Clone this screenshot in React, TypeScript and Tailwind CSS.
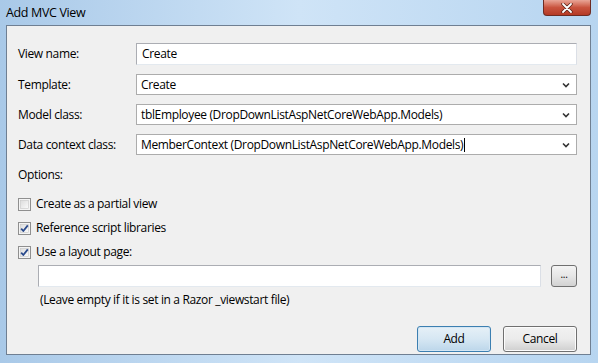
import React from 'react';

const font = { fontFamily: '"Open Sans", "Noto Sans", sans-serif' };

function Chevron() {
  return (
    <svg width="8" height="6" viewBox="0 0 8 6" className="shrink-0">
      <path d="M1 1.5 L4 4.5 L7 1.5" fill="none" stroke="#333" strokeWidth="1.6" />
    </svg>
  );
}

function Combo({ value, caret }: { value: string; caret?: boolean }) {
  return (
    <div className="flex h-[21px] items-center justify-between border border-[#acacac] bg-white pl-[4px] pr-[6px]">
      <span className="flex items-center text-[12px] leading-none text-black">
        {value}
        {caret && <span className="ml-[1px] inline-block h-[14px] w-px bg-black" />}
      </span>
      <Chevron />
    </div>
  );
}

function Check({ checked, label }: { checked?: boolean; label: string }) {
  return (
    <div className="flex h-[16px] items-center gap-[5px]">
      <svg width="13" height="13" viewBox="0 0 13 13" className="shrink-0">
        <defs>
          <linearGradient id="cbg" x1="0" y1="0" x2="1" y2="1">
            <stop offset="0" stopColor="#dcdcdc" />
            <stop offset="1" stopColor="#fbfbfb" />
          </linearGradient>
        </defs>
        <rect x="0.5" y="0.5" width="12" height="12" fill="#f4f4f4" stroke="#8f8f8f" />
        <rect x="2.5" y="2.5" width="8" height="8" fill="url(#cbg)" stroke="#c6c6c6" strokeWidth="0.6" />
        {checked && (
          <path d="M3.2 6.6 L5.3 9 L9.8 3.4" fill="none" stroke="#2a4a8c" strokeWidth="1.8" strokeLinejoin="round" />
        )}
      </svg>
      <span className="text-[12px] leading-none text-black">{label}</span>
    </div>
  );
}

export default function App() {
  return (
    <div
      style={font}
      className="flex h-[363px] w-[598px] flex-col overflow-hidden bg-gradient-to-r from-[#a9c9e8] via-[#cfe4f7] to-[#b7d5f0] tracking-[-0.35px]"
    >
      {/* title bar */}
      <div className="flex h-[25px] items-start justify-between pl-[6px] pr-[7px]">
        <span className="mt-[4px] text-[12.5px] text-black">Add MVC View</span>
        <div className="flex h-[16px] w-[48px] items-center justify-center rounded-b-[4px] border border-t-0 border-[#6d2b22] bg-gradient-to-b from-[#e8a597] via-[#c9533e] to-[#b43a25]">
          <svg width="12" height="10" viewBox="0 0 12 10">
            <path d="M2 1 L10 9 M10 1 L2 9" stroke="#5a2318" strokeWidth="3.4" strokeLinecap="round" />
            <path d="M2 1 L10 9 M10 1 L2 9" stroke="#ffffff" strokeWidth="1.8" strokeLinecap="round" />
          </svg>
        </div>
      </div>

      {/* client area */}
      <div className="mb-[8px] ml-[6px] mr-[7px] flex flex-1 flex-col border border-[#6f7f92] bg-[#f0f0f0] pl-[11px] pr-[13px] pt-[17px]">
        <div className="grid grid-cols-[118px_1fr] gap-y-[9px] items-center">
          <span className="text-[12px] text-black">View name:</span>
          <div className="flex h-[22px] items-center border border-[#abadb3] border-b-[#e3e9ef] border-r-[#dbdfe6] bg-white pl-[5px] text-[12px] text-black">
            Create
          </div>
          <span className="text-[12px] text-black">Template:</span>
          <Combo value="Create" />
          <span className="text-[12px] text-black">Model class:</span>
          <Combo value="tblEmployee (DropDownListAspNetCoreWebApp.Models)" />
          <span className="text-[12px] text-black">Data context class:</span>
          <Combo value="MemberContext (DropDownListAspNetCoreWebApp.Models)" caret />
        </div>

        <div className="mt-[11px] text-[12px] text-black">Options:</div>
        <div className="mt-[12px] flex flex-col gap-[8px]">
          <Check label="Create as a partial view" />
          <Check checked label="Reference script libraries" />
          <Check checked label="Use a layout page:" />
        </div>

        <div className="mt-[5px] flex items-center gap-[10px] pl-[20px]">
          <div className="h-[22px] flex-1 border border-[#abadb3] border-b-[#e3e9ef] border-r-[#dbdfe6] bg-white" />
          <div className="flex h-[22px] w-[26px] items-start justify-center rounded-[3px] border border-[#707070] bg-gradient-to-b from-[#f4f4f4] via-[#e6e6e6] to-[#d2d2d2] text-[10px] leading-[16px] text-black">
            ...
          </div>
        </div>
        <div className="mt-[4px] pl-[22px] text-[12px] text-black">
          (Leave empty if it is set in a Razor _viewstart file)
        </div>

        <div className="mt-auto mb-[2px] flex justify-end gap-[12px]">
          <div className="flex h-[26px] w-[74px] items-center justify-center rounded-[3px] border border-[#3c7fb1] bg-gradient-to-b from-[#e6f0f7] via-[#d6e7f3] to-[#bcd6ea] text-[12px] text-black shadow-[inset_0_0_0_1px_#d4e6f3]">
            Add
          </div>
          <div className="flex h-[26px] w-[74px] items-center justify-center rounded-[3px] border border-[#707070] bg-gradient-to-b from-[#f2f2f2] via-[#ebebeb] to-[#cfcfcf] text-[12px] text-black shadow-[inset_0_0_0_1px_#fcfcfc]">
            Cancel
          </div>
        </div>
      </div>
    </div>
  );
}
